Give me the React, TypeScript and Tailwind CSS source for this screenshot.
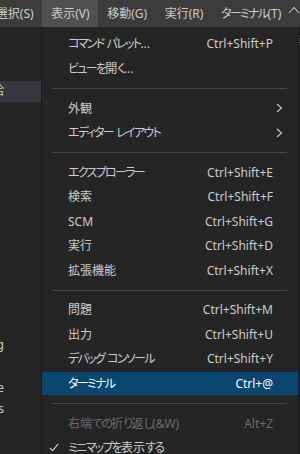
import React from "react";

type Item =
  | { sep: true }
  | {
      sep?: false;
      label: string;
      keys?: string;
      sub?: boolean;
      active?: boolean;
      disabled?: boolean;
      checked?: boolean;
    };

const items: Item[] = [
  { label: "コマンド パレット...", keys: "Ctrl+Shift+P" },
  { label: "ビューを開く..." },
  { sep: true },
  { label: "外観", sub: true },
  { label: "エディター レイアウト", sub: true },
  { sep: true },
  { label: "エクスプローラー", keys: "Ctrl+Shift+E" },
  { label: "検索", keys: "Ctrl+Shift+F" },
  { label: "SCM", keys: "Ctrl+Shift+G" },
  { label: "実行", keys: "Ctrl+Shift+D" },
  { label: "拡張機能", keys: "Ctrl+Shift+X" },
  { sep: true },
  { label: "問題", keys: "Ctrl+Shift+M" },
  { label: "出力", keys: "Ctrl+Shift+U" },
  { label: "デバッグ コンソール", keys: "Ctrl+Shift+Y" },
  { label: "ターミナル", keys: "Ctrl+@", active: true },
  { sep: true },
  { label: "右端での折り返し(&W)", keys: "Alt+Z", disabled: true },
  { label: "ミニマップを表示する", checked: true },
];

const menubar = [
  { label: "選択(S)" },
  { label: "表示(V)", open: true },
  { label: "移動(G)" },
  { label: "実行(R)" },
  { label: "ターミナル(T)" },
];

const sidebarRows: { text?: string; selected?: boolean }[] = [
  { text: "給", selected: true },
  {}, {}, {}, {}, {}, {}, {}, {}, {}, {}, {},
  { text: "Debug" },
  {},
  { text: "Save" },
  { text: "Settings" },
];

const isKana = (c: string) => /[\u3040-\u30ff]/.test(c);

function JP({ text }: { text: string }) {
  const runs: { kana: boolean; s: string }[] = [];
  for (const c of Array.from(text)) {
    const k = isKana(c);
    const last = runs[runs.length - 1];
    if (last && last.kana === k) last.s += c;
    else runs.push({ kana: k, s: c });
  }
  return (
    <>
      {runs.map((r, i) =>
        r.kana ? (
          <span key={i} className="tracking-[-1.7px]">
            {r.s}
          </span>
        ) : (
          <span key={i}>{r.s}</span>
        )
      )}
    </>
  );
}

function Chevron() {
  return (
    <svg width="7" height="10" viewBox="0 0 7 10" fill="none">
      <path d="M1 1 L5.5 5 L1 9" stroke="#cccccc" strokeWidth="1.1" />
    </svg>
  );
}

function Check() {
  return (
    <svg width="10" height="9" viewBox="0 0 10 9" fill="none">
      <path d="M0.8 4.8 L3.6 7.6 L9.2 0.8" stroke="#cccccc" strokeWidth="1.1" />
    </svg>
  );
}

export default function App() {
  return (
    <div className="w-[300px] h-[454px] overflow-hidden bg-[#252526] flex flex-col text-[12px] text-[#cccccc] font-['Noto_Sans','Noto_Sans_CJK_JP',sans-serif] [font-feature-settings:'palt']">
      {/* menubar */}
      <div className="h-[27px] shrink-0 bg-[#3c3c3c] flex items-stretch relative">
        <div className="flex items-stretch ml-[-13px]">
          {menubar.map((m) => (
            <div
              key={m.label}
              className={`px-[8.8px] flex items-center whitespace-nowrap ${m.open ? "bg-[#505050]" : ""}`}
            >
              <JP text={m.label} />
            </div>
          ))}
        </div>
        <div className="absolute left-[288px] top-[6px]">
          <svg width="12" height="8" viewBox="0 0 12 8" fill="none">
            <path d="M1 7 L6 1.5 L11 7" stroke="#cccccc" strokeWidth="1.1" />
          </svg>
        </div>
      </div>

      <div className="flex-1 flex min-h-0">
        {/* sidebar */}
        <div className="w-[41px] shrink-0 bg-[#252526] overflow-hidden pt-[54px] flex flex-col">
          {sidebarRows.map((r, i) => (
            <div
              key={i}
              className={`h-[21.2px] shrink-0 flex items-center ${r.selected ? "bg-[#37373d]" : ""}`}
            >
              {r.text && (
                <div className="w-[4px] flex justify-end whitespace-nowrap text-[12.5px]">
                  <span>{r.text}</span>
                </div>
              )}
            </div>
          ))}
        </div>

        {/* dropdown menu */}
        <div className="w-[257px] shrink-0 bg-[#252526] border-l border-[#1a1a1a] pt-[5px] flex flex-col">
          {items.map((it, i) =>
            it.sep ? (
              <div key={i} className="h-[15.6px] shrink-0 flex items-center px-[11px]">
                <div className="h-px w-full bg-[#474747]" />
              </div>
            ) : (
              <div key={i} className="h-[24.4px] shrink-0 flex items-center">
                <div
                  className={`h-[22.4px] w-full flex items-center relative pl-[26px] pr-[25px] ${
                    it.active ? "bg-[#094771] text-white" : ""
                  } ${it.disabled ? "text-[#6b6b6b]" : ""}`}
                >
                  {it.checked && (
                    <div className="absolute left-[7px] top-[6px]">
                      <Check />
                    </div>
                  )}
                  <span className="flex-1 whitespace-nowrap">
                    <JP text={it.label} />
                  </span>
                  {it.keys && <span className="whitespace-nowrap">{it.keys}</span>}
                  {it.sub && (
                    <div className="absolute right-[15px] top-[6px]">
                      <Chevron />
                    </div>
                  )}
                </div>
              </div>
            )
          )}
        </div>

        {/* editor edge */}
        <div className="flex-1 bg-[#1e1e1e] overflow-hidden pt-[9px]">
          <div className="text-[10px] leading-none text-[#8aa9c9]">≡</div>
        </div>
      </div>
    </div>
  );
}
